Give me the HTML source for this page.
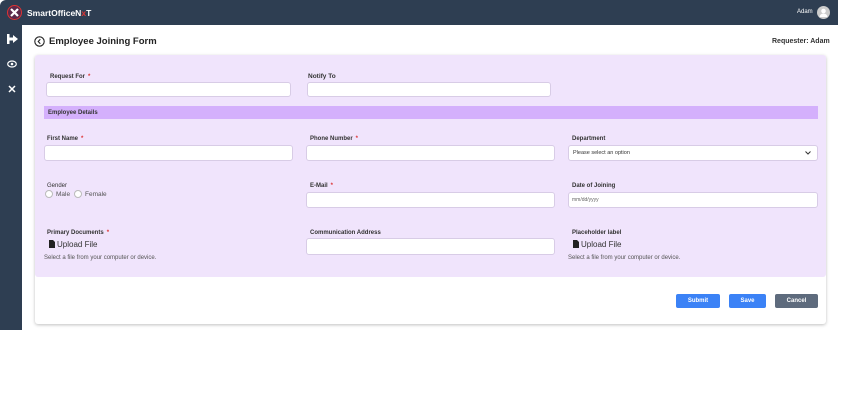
<!DOCTYPE html><html><head><style>
*{margin:0;padding:0;box-sizing:border-box}
body{width:841px;height:406px;background:#fff;font-family:"Liberation Sans",Arial,sans-serif;position:relative;overflow:hidden}
.abs{position:absolute}
.top{left:0;top:0;width:838px;height:25px;background:#2e3e52;border-radius:6px 0 0 0}
.side{left:0;top:25px;width:22px;height:305px;background:#2e3e52}
.lbl{position:absolute;font-size:6px;font-weight:bold;color:#333}
.lbl i{color:#d33;font-style:normal;margin-left:3px}
.in{position:absolute;background:#fff;border:1px solid #d8cce6;border-radius:3px}
.btn{position:absolute;top:294px;height:14px;border-radius:2px;color:#fff;font-size:6px;font-weight:bold;text-align:center;line-height:14px}
.up{position:absolute;font-size:8px;color:#333}
.up svg{vertical-align:-1px;margin-right:2px}
.hint{position:absolute;font-size:6px;color:#555}
</style></head><body>
<div class="abs top"></div>
<div class="abs side"></div>
<svg class="abs" style="left:7px;top:5px" width="15" height="15" viewBox="0 0 15 15"><circle cx="7.5" cy="7.5" r="7" fill="#5a2a4a" stroke="#d33" stroke-width="1"/><path d="M4 4l7 7M11 4l-7 7" stroke="#fff" stroke-width="2.2"/></svg>
<div class="abs" style="left:27px;top:8px;font-size:8.5px;font-weight:bold;color:#fff">SmartOfficeN<span style="color:#d33">x</span>T</div>
<div class="abs" style="left:797px;top:9px;font-size:6px;color:#fff">Adam</div>
<svg class="abs" style="left:817px;top:6px" width="13" height="13" viewBox="0 0 13 13"><circle cx="6.5" cy="6.5" r="6.5" fill="#ccc"/><circle cx="6.5" cy="5" r="2.3" fill="#fff"/><path d="M2.5 11a4 3.5 0 0 1 8 0z" fill="#fff"/></svg>
<svg class="abs" style="left:7px;top:34px" width="12" height="10" viewBox="0 0 12 10"><rect x="0" y="0" width="2.5" height="10" fill="#fff"/><path d="M2 3.5h4V1l5 4-5 4V6.5H2z" fill="#fff"/></svg>
<svg class="abs" style="left:7px;top:60px" width="10" height="8" viewBox="0 0 10 8"><ellipse cx="5" cy="4" rx="4.3" ry="3" fill="none" stroke="#fff" stroke-width="1.2"/><circle cx="5" cy="4" r="1.3" fill="#fff"/></svg>
<svg class="abs" style="left:8px;top:85px" width="8" height="8" viewBox="0 0 8 8"><path d="M1 1l6 6M7 1l-6 6" stroke="#fff" stroke-width="1.5"/></svg>
<svg class="abs" style="left:34px;top:36px" width="11" height="11" viewBox="0 0 11 11"><circle cx="5.5" cy="5.5" r="4.7" fill="none" stroke="#222" stroke-width="1.1"/><path d="M6.3 3.3L4.2 5.5l2.1 2.2" fill="none" stroke="#222" stroke-width="1.1"/></svg>
<div class="abs" style="left:49px;top:36px;font-size:9.5px;font-weight:bold;color:#222">Employee Joining Form</div>
<div class="abs" style="left:772px;top:38px;font-size:7px;font-weight:bold;color:#333">Requester: Adam</div>
<div class="abs" style="left:35px;top:55px;width:791px;height:269px;background:#fff;border-radius:3px;box-shadow:0 1px 3px rgba(0,0,0,.25)"></div>
<div class="abs" style="left:35px;top:55px;width:791px;height:222px;background:#f0e4fc;border-radius:3px"></div>
<div class="lbl" style="left:50px;top:74px">Request For<i>*</i></div>
<div class="in" style="left:46px;top:82px;width:245px;height:15px"></div>
<div class="lbl" style="left:308px;top:73px;font-size:6.5px">Notify To</div>
<div class="in" style="left:307px;top:82px;width:244px;height:15px"></div>
<div class="abs" style="left:44px;top:106px;width:774px;height:13px;background:#d4b0fc"></div>
<div class="lbl" style="left:48px;top:110px">Employee Details</div>
<div class="lbl" style="left:47px;top:136px">First Name<i>*</i></div>
<div class="in" style="left:44px;top:145px;width:249px;height:16px"></div>
<div class="lbl" style="left:310px;top:136px">Phone Number<i>*</i></div>
<div class="in" style="left:306px;top:145px;width:249px;height:16px"></div>
<div class="lbl" style="left:572px;top:136px">Department</div>
<div class="in" style="left:568px;top:145px;width:250px;height:16px"></div>
<div class="abs" style="left:573px;top:150px;font-size:5.5px;color:#333">Please select an option</div>
<svg class="abs" style="left:805px;top:151px" width="6" height="4" viewBox="0 0 6 4"><path d="M.5.5L3 3 5.5.5" fill="none" stroke="#333" stroke-width="1"/></svg>
<div class="lbl" style="left:47px;top:183px;font-weight:normal">Gender</div>
<div class="abs" style="left:45px;top:190px;width:8px;height:8px;border:1px solid #bbb;border-radius:50%;background:#fff"></div>
<div class="abs" style="left:56px;top:191px;font-size:6.5px;color:#555">Male</div>
<div class="abs" style="left:74px;top:190px;width:8px;height:8px;border:1px solid #bbb;border-radius:50%;background:#fff"></div>
<div class="abs" style="left:85px;top:191px;font-size:6.5px;color:#555">Female</div>
<div class="lbl" style="left:310px;top:183px">E-Mail<i>*</i></div>
<div class="in" style="left:306px;top:192px;width:249px;height:16px"></div>
<div class="lbl" style="left:572px;top:183px">Date of Joining</div>
<div class="in" style="left:568px;top:192px;width:250px;height:16px"></div>
<div class="abs" style="left:572px;top:197px;font-size:5px;color:#666">mm/dd/yyyy</div>
<div class="lbl" style="left:47px;top:230px">Primary Documents<i>*</i></div>
<div class="up" style="left:49px;top:240px"><svg width="6" height="8" viewBox="0 0 6 8"><path d="M0 0h4l2 2v6H0z" fill="#222"/></svg>Upload File</div>
<div class="hint" style="left:44px;top:255px">Select a file from your computer or device.</div>
<div class="lbl" style="left:310px;top:230px">Communication Address</div>
<div class="in" style="left:306px;top:238px;width:249px;height:17px"></div>
<div class="lbl" style="left:572px;top:230px">Placeholder label</div>
<div class="up" style="left:573px;top:240px"><svg width="6" height="8" viewBox="0 0 6 8"><path d="M0 0h4l2 2v6H0z" fill="#222"/></svg>Upload File</div>
<div class="hint" style="left:568px;top:255px">Select a file from your computer or device.</div>
<div class="btn" style="left:676px;width:44px;background:#3b82f6">Submit</div>
<div class="btn" style="left:729px;width:37px;background:#3b82f6">Save</div>
<div class="btn" style="left:775px;width:43px;background:#5e6b7d">Cancel</div>
</body></html>
